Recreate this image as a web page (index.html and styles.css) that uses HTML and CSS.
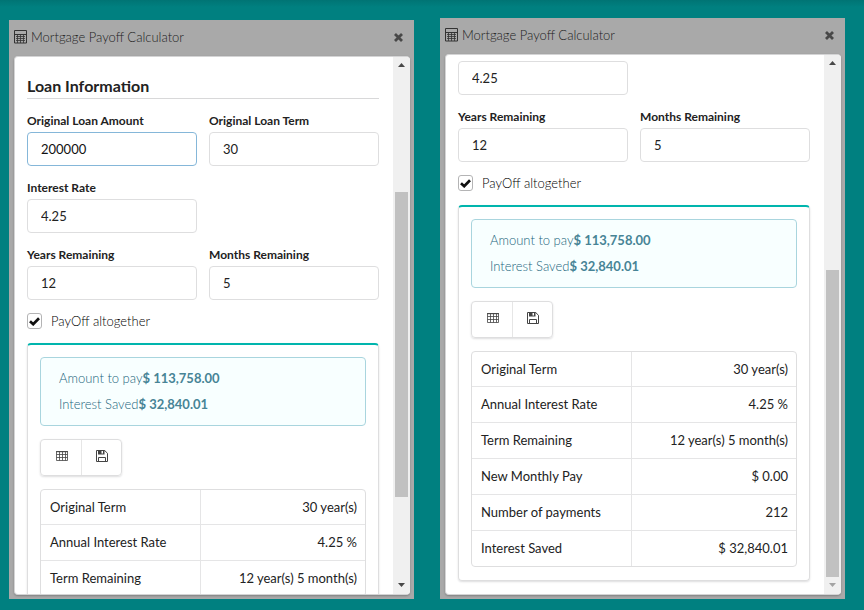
FILE: index.html
```
<!DOCTYPE html>
<html lang="en">
<head>
<meta charset="utf-8">
<title>Mortgage Payoff Calculator</title>
<link rel="stylesheet" href="styles.css">
</head>
<body>
<svg class="sprite" aria-hidden="true">
  <symbol id="calculator" viewBox="0 0 13 14">
    <path fill="none" stroke="currentColor" d="M.5.5h12v12.500H.5zM.5 4.500h12"/>
    <path fill="none" stroke="currentColor" stroke-width=".8" d="M2 6.500h9M2 8.500h9M2 10.500h9M3.500 5v8M6.500 5v8M9.500 5v8"/>
  </symbol>
  <symbol id="close" viewBox="0 0 9 9">
    <path fill="none" stroke="currentColor" stroke-width="2.800" d="M1 1l7 7M8 1L1 8"/>
  </symbol>
  <symbol id="check" viewBox="0 0 11 9">
    <path fill="none" stroke="currentColor" stroke-width="2.700" d="M1 4.200L4.200 7.200L10 1.300"/>
  </symbol>
  <symbol id="grid" viewBox="0 0 12 10">
    <path fill="none" stroke="currentColor" stroke-width=".8" d="M.5.5h11v9H.5zM.5 3.500h11M.5 6.500h11M3.500.5v9M6.500.5v9M9.500.5v9"/>
    <path stroke="currentColor" d="M0 .7h12"/>
  </symbol>
  <symbol id="save" viewBox="0 0 12 12">
    <path fill="none" stroke="currentColor" d="M.5.5h8.200L11.500 3.300v8.200H.5zM2.500 11.500v-4h7v4"/>
    <path fill="currentColor" fill-rule="evenodd" d="M2 0h6.500v4.500H2zM5.500 1v2.500h1.500V1z"/>
  </symbol>
  <symbol id="up" viewBox="0 0 7 4"><path fill="currentColor" d="M0 4L3.500 0L7 4z"/></symbol>
  <symbol id="down" viewBox="0 0 7 4"><path fill="currentColor" d="M0 0h7L3.500 4z"/></symbol>
</svg>
<main class="desktop">
  <section class="window window-first">
    <header class="titlebar">
      <svg class="icon-calc"><use href="#calculator"/></svg>
      <h1>Mortgage Payoff Calculator</h1>
      <button class="close" type="button" aria-label="Close"><svg><use href="#close"/></svg></button>
    </header>
    <div class="pane">
      <div class="viewport">
        <form class="content">
          <h2>Loan Information</h2>
          <div class="fields">
            <div class="field"><label for="amount-a">Original Loan Amount</label><input class="focused" id="amount-a" type="text" value="200000"></div>
            <div class="field"><label for="term-a">Original Loan Term</label><input id="term-a" type="text" value="30"></div>
            <div class="field field-row"><label for="rate-a">Interest Rate</label><input id="rate-a" type="text" value="4.25"></div>
            <div class="field"><label for="years-a">Years Remaining</label><input id="years-a" type="text" value="12"></div>
            <div class="field"><label for="months-a">Months Remaining</label><input id="months-a" type="text" value="5"></div>
          </div>
          <div class="option"><span class="tick"><input id="payoff-a" type="checkbox" checked><svg><use href="#check"/></svg></span><label for="payoff-a">PayOff altogether</label></div>
          <div class="card">
            <div class="message"><p>Amount to pay<b>$ 113,758.00</b></p><p>Interest Saved<b>$ 32,840.01</b></p></div>
            <div class="buttons">
              <button type="button" aria-label="Table"><svg class="icon-grid"><use href="#grid"/></svg></button>
              <button type="button" aria-label="Save"><svg class="icon-save"><use href="#save"/></svg></button>
            </div>
            <table>
              <tr><td>Original Term</td><td>30 year(s)</td></tr>
              <tr><td>Annual Interest Rate</td><td>4.25 %</td></tr>
              <tr><td>Term Remaining</td><td>12 year(s) 5 month(s)</td></tr>
            </table>
          </div>
        </form>
      </div>
      <div class="scrollbar" aria-hidden="true">
        <svg><use href="#up"/></svg>
        <div class="track track-middle"><div class="thumb"></div></div>
        <svg><use href="#down"/></svg>
      </div>
    </div>
  </section>

  <section class="window">
    <header class="titlebar">
      <svg class="icon-calc"><use href="#calculator"/></svg>
      <h1>Mortgage Payoff Calculator</h1>
      <button class="close" type="button" aria-label="Close"><svg><use href="#close"/></svg></button>
    </header>
    <div class="pane">
      <div class="viewport viewport-end">
        <form class="content">
          <div class="fields">
            <div class="field field-row"><input id="rate-b" type="text" value="4.25" aria-label="Interest Rate"></div>
            <div class="field"><label for="years-b">Years Remaining</label><input id="years-b" type="text" value="12"></div>
            <div class="field"><label for="months-b">Months Remaining</label><input id="months-b" type="text" value="5"></div>
          </div>
          <div class="option"><span class="tick"><input id="payoff-b" type="checkbox" checked><svg><use href="#check"/></svg></span><label for="payoff-b">PayOff altogether</label></div>
          <div class="card">
            <div class="message"><p>Amount to pay<b>$ 113,758.00</b></p><p>Interest Saved<b>$ 32,840.01</b></p></div>
            <div class="buttons">
              <button type="button" aria-label="Table"><svg class="icon-grid"><use href="#grid"/></svg></button>
              <button type="button" aria-label="Save"><svg class="icon-save"><use href="#save"/></svg></button>
            </div>
            <table>
              <tr><td>Original Term</td><td>30 year(s)</td></tr>
              <tr><td>Annual Interest Rate</td><td>4.25 %</td></tr>
              <tr><td>Term Remaining</td><td>12 year(s) 5 month(s)</td></tr>
              <tr><td>New Monthly Pay</td><td>$ 0.00</td></tr>
              <tr><td>Number of payments</td><td>212</td></tr>
              <tr><td>Interest Saved</td><td>$ 32,840.01</td></tr>
            </table>
          </div>
        </form>
      </div>
      <div class="scrollbar" aria-hidden="true">
        <svg><use href="#up"/></svg>
        <div class="track track-end"><div class="thumb"></div></div>
        <svg class="disabled"><use href="#down"/></svg>
      </div>
    </div>
  </section>
</main>
</body>
</html>
```

FILE: styles.css
```
* { box-sizing: border-box; }
body {
  margin: 0;
  background: linear-gradient(#007474, #008080 7px);
  color: #222;
  font: 400 13px/20px Lato, "Liberation Sans", sans-serif;
}
h1, h2, p { margin: 0; }
.sprite { display: none; }
svg { display: block; }
button, input { font: inherit; color: inherit; }

.desktop {
  display: grid;
  grid-template-columns: 1fr 1fr;
  gap: 26px;
  height: 100vh;
  padding: 18px 19px 11px 9px;
}
.window {
  display: flex;
  flex-direction: column;
  min-width: 0;
  min-height: 0;
  padding: 0 4px 4px 5px;
  background: #a9a9a9;
}
.window-first { margin-top: 2px; }
.titlebar {
  display: flex;
  align-items: center;
  flex: none;
  gap: 4px;
  height: 36px;
  padding: 0 7px 2px 0;
  color: #484848;
}
.titlebar h1 { flex: 1; color: #222; font-size: 13px; font-weight: 300; }
.icon-calc { width: 13px; height: 14px; color: #333; }
.close { padding: 0; border: 0; background: none; }
.close svg { width: 9px; height: 9px; }

.pane {
  display: flex;
  flex: 1;
  min-height: 0;
  overflow: hidden;
  border: 1px solid #d4d4d5;
  border-right: 0;
  border-radius: 4px;
  background: #fff;
  box-shadow: 0 1px 2px rgba(34, 36, 38, .3);
}
.viewport {
  display: flex;
  flex: 1;
  flex-direction: column;
  min-width: 0;
  overflow: hidden;
}
.viewport-end { justify-content: flex-end; }
.content { flex: none; padding: 13px 14px 13px 12px; }

h2 {
  margin: 7px 0 13px;
  padding-bottom: 3px;
  border-bottom: 1px solid #d8d8d9;
  font-size: 16px;
  font-weight: 700;
  line-height: 18px;
}
.fields {
  display: grid;
  grid-template-columns: 1fr 1fr;
  gap: 13px 12px;
}
.field { display: flex; flex-direction: column; gap: 3px; min-width: 0; }
.field-row { grid-column: 1 / -1; width: calc(50% - 6px); }
.field label { font-size: 12px; font-weight: 700; line-height: 17px; }
.field input {
  width: 100%;
  height: 34px;
  padding: 0 13px 1px;
  border: 1px solid #dededf;
  border-radius: 4px;
  background: #fff;
}
.field .focused { border-color: #85b7d9; color: #111; }

.option { display: flex; align-items: center; gap: 9px; margin: 11px 0 12px; color: #000; font-weight: 300; }
.tick { display: grid; place-items: center; }
.tick > * { grid-area: 1 / 1; }
.tick input {
  width: 15px;
  height: 16px;
  margin: 0;
  appearance: none;
  border: 1px solid #b4b4b5;
  border-radius: 3px;
}
.tick svg { width: 11px; height: 9px; color: #111; pointer-events: none; }

.card {
  padding: 12px 12px 13px;
  border: 1px solid #dededf;
  border-top: 2px solid #00b5ad;
  border-radius: 4px;
  box-shadow: 0 1px 2px rgba(34, 36, 38, .15);
}
.message {
  padding: 7px 18px 8px;
  border: 1px solid #a9d5de;
  border-radius: 4px;
  background: #f8ffff;
  color: #1b657d;
  font-weight: 300;
  line-height: 26px;
}
.message b { color: #478496; font-weight: 700; }
.buttons {
  display: inline-flex;
  margin: 13px 0;
  vertical-align: top;
  border: 1px solid #dededf;
  border-radius: 4px;
  box-shadow: 0 1px 2px rgba(34, 36, 38, .15);
}
.buttons button {
  display: grid;
  place-items: center;
  width: 39px;
  height: 35px;
  padding: 0 0 3px;
  border: 0;
  background: none;
  color: #444;
}
.buttons button:first-child { width: 41px; padding-left: 2px; border-right: 1px solid #e6e6e6; }
.icon-grid { width: 12px; height: 10px; }
.icon-save { width: 12px; height: 12px; }

table {
  width: 100%;
  table-layout: fixed;
  border: 1px solid #dededf;
  border-radius: 4px;
  border-spacing: 0;
}
td { height: 36px; padding: 0 8px 1px; border-bottom: 1px solid #e5e5e6; }
td:first-child { width: 49%; padding-left: 9px; }
td + td { border-left: 1px solid #e5e5e6; text-align: right; }
tr:first-child td, tr:last-child td { height: 35px; }
tr:last-child td { border-bottom: 0; }

.scrollbar {
  display: flex;
  flex: none;
  flex-direction: column;
  width: 17px;
  background: #f0f0f0;
  color: #484848;
}
.scrollbar svg { flex: none; width: 7px; height: 4px; margin: 6px 5px 7px; }
.scrollbar .disabled { color: #a3a3a3; }
.track { display: grid; flex: 1; padding: 0 2px; }
.track-middle { grid-template-rows: 118fr 306fr 80fr; }
.track-end { grid-template-rows: 198fr 307fr; }
.thumb { grid-row: 2; background: #c1c1c1; }
```
